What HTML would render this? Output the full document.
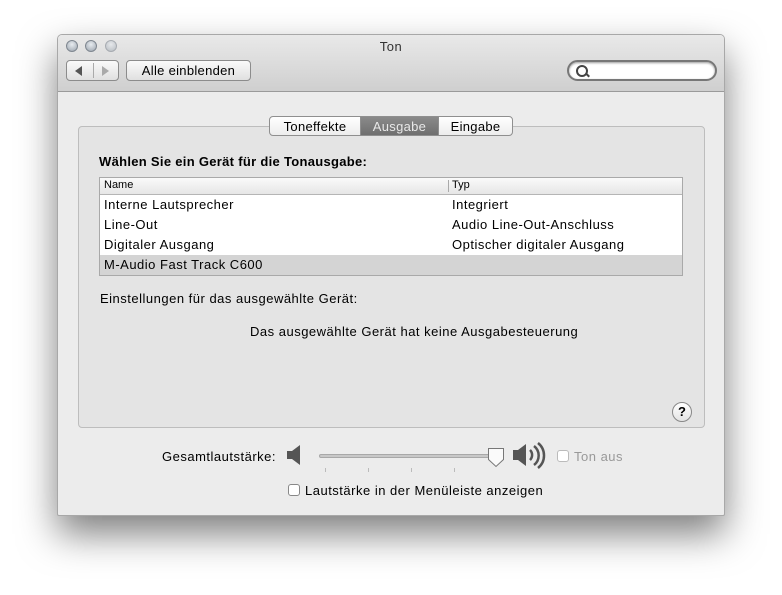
<!DOCTYPE html><html><head><meta charset="utf-8"><style>
body{margin:0;width:782px;height:595px;background:#fff;position:relative;font-family:"Liberation Sans",sans-serif;font-size:13px;letter-spacing:.5px;color:#000;overflow:hidden}
.a{position:absolute}
.win{left:57px;top:34px;width:668px;height:482px;background:#ececec;border-radius:5px 5px 2px 2px;box-shadow:0 18px 38px rgba(0,0,0,.5);overflow:hidden;border:1px solid #a8a8a8;box-sizing:border-box}
.tb{left:0;top:0;width:100%;height:56px;background:linear-gradient(#e9e9e9,#cfcfcf);border-bottom:1px solid #9a9a9a}
.dot{width:12px;height:12px;border-radius:50%;top:5px;background:radial-gradient(circle at 50% 35%,#e8ecf0,#9aa3ad);border:1px solid #7f8790;box-sizing:border-box}
.btn{background:linear-gradient(#fafafa,#e0e0e0);border:1px solid #8c8c8c;border-radius:4px;box-sizing:border-box}
.tab{top:81px;height:20px;line-height:19px;text-align:center;border:1px solid #8f8f8f;box-sizing:border-box;background:linear-gradient(#fff,#ededed);letter-spacing:.3px}
.row{left:1px;width:581px;height:20px;line-height:20px}
.cb{width:12px;height:12px;border:1px solid #888;border-radius:3px;background:#fff;box-sizing:border-box}
</style></head><body>
<div class="a win">
 <div class="a tb">
  <div class="a dot" style="left:8px"></div><div class="a dot" style="left:27px"></div><div class="a dot" style="left:47px;opacity:.6"></div>
  <div class="a" style="left:0;width:100%;top:4px;text-align:center;color:#333">Ton</div>
  <div class="a btn" style="left:8px;top:25px;width:53px;height:21px"><div class="a" style="left:26px;top:2px;width:1px;height:15px;background:#aaa"></div>
   <div class="a" style="left:8px;top:5px;width:0;height:0;border:5px solid transparent;border-right:7px solid #555;border-left:0"></div>
   <div class="a" style="left:35px;top:5px;width:0;height:0;border:5px solid transparent;border-left:7px solid #aaa;border-right:0"></div></div>
  <div class="a btn" style="left:68px;top:25px;width:125px;height:21px;text-align:center;line-height:19px;letter-spacing:.3px">Alle einblenden</div>
  <div class="a" style="left:509px;top:25px;width:150px;height:21px;border:2px solid #777;border-radius:12px;background:#fff;box-sizing:border-box;box-shadow:inset 0 1px 2px #999">
   <div class="a" style="left:7px;top:3px;width:8px;height:8px;border:2px solid #444;border-radius:50%"></div>
   <div class="a" style="left:16px;top:12px;width:5px;height:2px;background:#444;transform:rotate(45deg)"></div></div>
 </div>
 <div class="a" style="left:20px;top:91px;width:627px;height:302px;background:#e4e4e4;border:1px solid #bdbdbd;border-radius:4px;box-sizing:border-box"></div>
 <div class="a tab" style="left:211px;width:92px;border-radius:4px 0 0 4px">Toneffekte</div>
 <div class="a tab" style="left:302px;width:79px;background:linear-gradient(#8a8a8a,#6f6f6f);color:#e8e8e8">Ausgabe</div>
 <div class="a tab" style="left:380px;width:75px;border-radius:0 4px 4px 0">Eingabe</div>
 <div class="a" style="left:41px;top:119px;font-weight:bold;letter-spacing:.3px">Wählen Sie ein Gerät für die Tonausgabe:</div>
 <div class="a" style="left:41px;top:142px;width:584px;height:99px;background:#fff;border:1px solid #a9a9a9;box-sizing:border-box">
  <div class="a" style="left:0;top:0;width:582px;height:16px;background:linear-gradient(#fafafa,#e6e6e6);border-bottom:1px solid #b5b5b5;font-size:11px;line-height:15px;letter-spacing:0"><span class="a" style="left:4px">Name</span><span class="a" style="left:348px;top:2px;width:1px;height:12px;background:#aaa"></span><span class="a" style="left:352px">Typ</span></div>
  <div class="a row" style="top:17px"><span class="a" style="left:3px">Interne Lautsprecher</span><span class="a" style="left:351px">Integriert</span></div>
  <div class="a row" style="top:37px"><span class="a" style="left:3px">Line-Out</span><span class="a" style="left:351px">Audio Line-Out-Anschluss</span></div>
  <div class="a row" style="top:57px"><span class="a" style="left:3px">Digitaler Ausgang</span><span class="a" style="left:351px">Optischer digitaler Ausgang</span></div>
  <div class="a row" style="top:77px;background:#d4d4d4;left:0;width:582px"><span class="a" style="left:4px">M-Audio Fast Track C600</span></div>
 </div>
 <div class="a" style="left:42px;top:256px">Einstellungen für das ausgewählte Gerät:</div>
 <div class="a" style="left:192px;top:289px">Das ausgewählte Gerät hat keine Ausgabesteuerung</div>
 <div class="a" style="left:614px;top:367px;width:20px;height:20px;border:1px solid #888;border-radius:50%;background:linear-gradient(#fff,#e4e4e4);box-sizing:border-box;text-align:center;line-height:18px;font-weight:bold;font-size:13px;letter-spacing:0">?</div>
 <div class="a" style="left:60px;width:158px;text-align:right;top:414px">Gesamtlautstärke:</div>
 <svg class="a" style="left:228px;top:408px" width="20" height="24"><path d="M1 8h5l8-6v20l-8-6H1z" fill="#555"/></svg>
 <div class="a" style="left:261px;top:419px;width:180px;height:4px;border-radius:2px;background:#c8c8c8;border:1px solid #a8a8a8;box-sizing:border-box"></div>
 <div class="a" style="left:310px;top:433px;width:1px;height:4px;background:#bbb"></div><div class="a" style="left:353px;top:433px;width:1px;height:4px;background:#bbb"></div><div class="a" style="left:396px;top:433px;width:1px;height:4px;background:#bbb"></div><div class="a" style="left:267px;top:433px;width:1px;height:4px;background:#bbb"></div>
 <svg class="a" style="left:429px;top:412px" width="18" height="22"><path d="M1.5 1.5h15v11l-7.5 7-7.5-7z" fill="#fafafa" stroke="#777"/></svg>
 <svg class="a" style="left:454px;top:406px" width="34" height="30"><path d="M1 9h5l8-6v22l-8-6H1z" fill="#555"/><path d="M18 9a7 7 0 0 1 0 10M22 5a12 12 0 0 1 0 19M26 2a16 16 0 0 1 0 25" stroke="#555" stroke-width="2.5" fill="none"/></svg>
 <div class="a cb" style="left:499px;top:415px;border-color:#bbb"></div>
 <div class="a" style="left:516px;top:414px;color:#999">Ton aus</div>
 <div class="a cb" style="left:230px;top:449px"></div>
 <div class="a" style="left:247px;top:448px">Lautstärke in der Menüleiste anzeigen</div>
</div>
</body></html>
